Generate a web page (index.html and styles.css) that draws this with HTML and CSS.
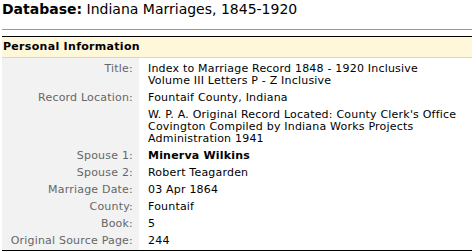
FILE: index.html
```html
<!DOCTYPE html>
<html lang="en">
<head>
<meta charset="utf-8">
<title>Indiana Marriages, 1845-1920</title>
<link rel="stylesheet" href="styles.css">
</head>
<body>
<div class="page">
  <h1 class="db-title"><b>Database:</b> Indiana Marriages, 1845-1920</h1>
  <section class="record">
    <h2 class="record-head">Personal Information</h2>
    <dl class="fields">
      <dt>Title:</dt>
      <dd>Index to Marriage Record 1848 - 1920 Inclusive<br>Volume III Letters P - Z Inclusive</dd>
      <dt>Record Location:</dt>
      <dd>Fountaif County, Indiana</dd>
      <dt></dt>
      <dd>W. P. A. Original Record Located: County Clerk's Office<br>Covington Compiled by Indiana Works Projects<br>Administration 1941</dd>
      <dt>Spouse 1:</dt>
      <dd class="strong">Minerva Wilkins</dd>
      <dt>Spouse 2:</dt>
      <dd>Robert Teagarden</dd>
      <dt>Marriage Date:</dt>
      <dd>03 Apr 1864</dd>
      <dt>County:</dt>
      <dd>Fountaif</dd>
      <dt>Book:</dt>
      <dd>5</dd>
      <dt>Original Source Page:</dt>
      <dd>244</dd>
    </dl>
  </section>
</div>
</body>
</html>
```

FILE: styles.css
```css
html, body {
  margin: 0;
  padding: 0;
  background: #ffffff;
}

body {
  font-family: "DejaVu Sans", Verdana, sans-serif;
  color: #000000;
}

.page {
  padding-left: 2px;
}

.db-title {
  margin: 0;
  padding: 1px 0 11px 0;
  font-size: 14px;
  line-height: 17px;
  font-weight: normal;
  border-bottom: 1px solid #9a9a9a;
  white-space: nowrap;
}

.db-title b {
  font-weight: bold;
}

.record {
  margin-top: 6px;
  border-top: 1px solid #000000;
}

.record-head {
  margin: 0;
  padding-left: 1px;
  height: 20px;
  line-height: 20px;
  font-size: 11px;
  letter-spacing: 0.3px;
  font-weight: bold;
  background: #fff7da;
  border-bottom: 1px solid #d6d6d6;
}

.fields {
  margin: 0;
  display: grid;
  grid-template-columns: 137px 1fr;
  font-size: 11px;
  line-height: 12px;
  letter-spacing: 0.2px;
  border-bottom: 1px solid #000000;
}

.fields dt {
  margin: 0;
  padding: 2.5px 6px 2.5px 0;
  text-align: right;
  background: #f2f2f2;
  color: #666666;
  white-space: nowrap;
}

.fields dd {
  margin: 0;
  padding: 2.5px 0 2.5px 9px;
  color: #000000;
  white-space: nowrap;
}

.fields dt:first-of-type,
.fields dd:first-of-type {
  padding-top: 5px;
}

.fields .strong {
  font-weight: bold;
}
```
